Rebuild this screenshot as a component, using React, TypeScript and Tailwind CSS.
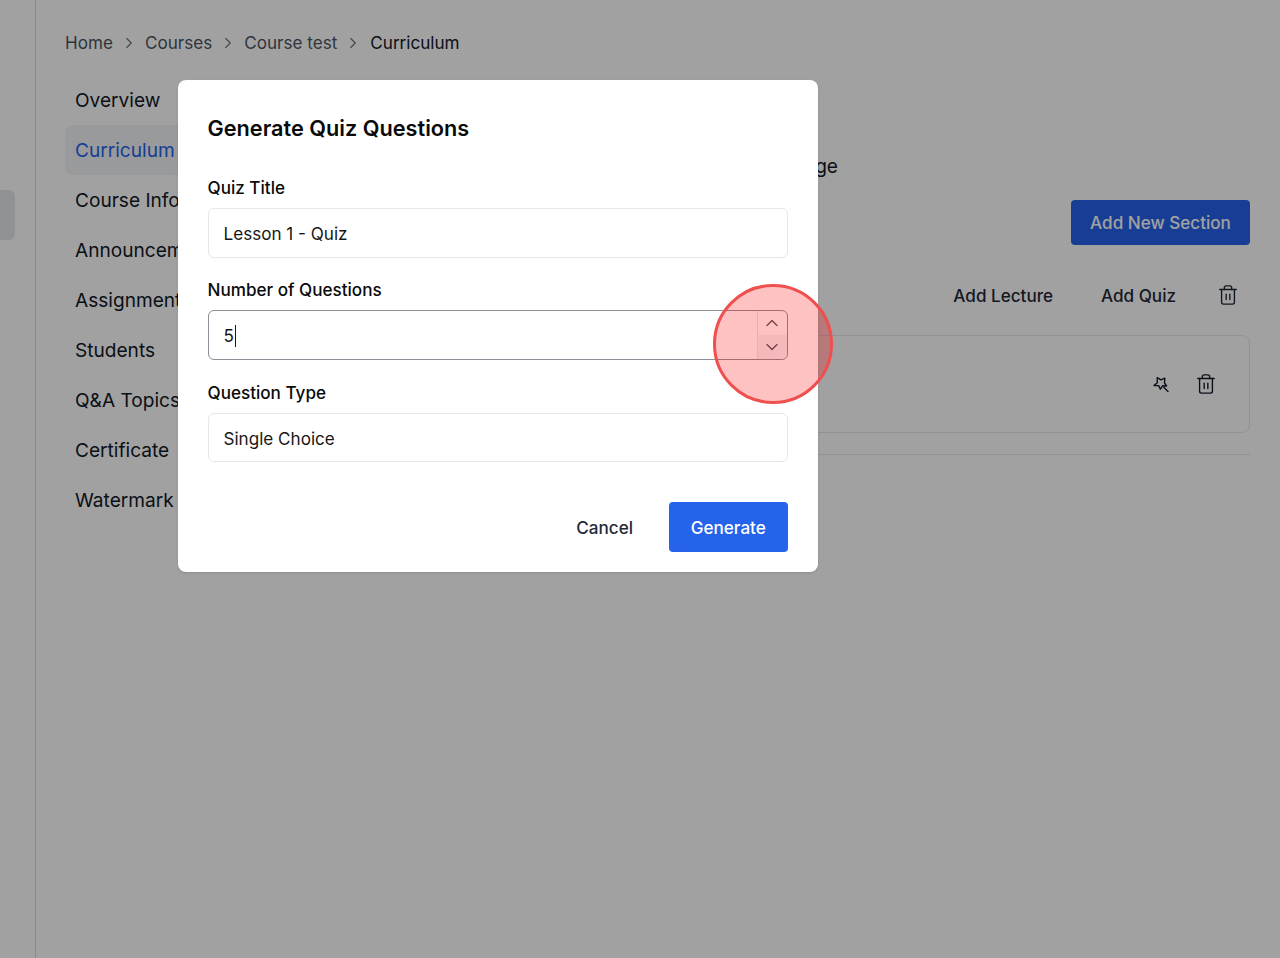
import { ChevronDown, ChevronRight, ChevronUp, Trash2 } from 'lucide-react';

const tabs = ['Overview', 'Curriculum', 'Course Info', 'Announcements', 'Assignments', 'Students', 'Q&A Topics', 'Certificate', 'Watermark'];
const crumbs = ['Home', 'Courses', 'Course test'];

function Wand() {
  return (
    <svg width="20" height="20" viewBox="0 0 20 20" fill="none" stroke="currentColor" strokeWidth="1.4" strokeLinejoin="round" strokeLinecap="round">
      <path d="M3 11.5 L6.3 8.8 L6.2 3.6 L10 5.8 L13.8 4.2 L13.5 9 L15.6 12 L11.6 11.8 L9.4 15.2 L7.6 11.6 Z" />
      <path d="M13 13.4 L17 17.4" />
    </svg>
  );
}

function Field({ label, value }: { label: string; value: string }) {
  return (
    <div className="flex flex-col">
      <label className="mb-[8px] text-[17.1px] leading-[24px] font-[450] text-[#0a0a0a]">{label}</label>
      <input
        readOnly
        value={value}
        className="h-[49.5px] w-full rounded-[6px] border border-[#e5e7eb] bg-white px-[15px] pt-[2px] text-[17.1px] text-[#171717] outline-none"
      />
    </div>
  );
}

export default function App() {
  return (
    <div className="relative h-[958px] w-[1280px] overflow-hidden bg-white font-['Inter',sans-serif] text-[#111827]">
      <div className="flex h-full">
        {/* Collapsed sidebar */}
        <aside className="w-[36px] shrink-0 border-r border-[#d9dbe0] pt-[190px]">
          <div className="h-[50px] w-[15px] rounded-r-[6px] bg-[#e5e7eb]" />
        </aside>

        <main className="flex-1 pl-[29px] pr-[30px] pt-[30px]">
          <nav className="flex h-[26px] items-center text-[17.1px] leading-[26px] text-[#4b5563]">
            {crumbs.map((c) => (
              <span key={c} className="flex items-center">
                {c}
                <ChevronRight className="mx-[7px] h-[18px] w-[18px] text-[#6b7280]" strokeWidth={1.5} />
              </span>
            ))}
            <span className="ml-[1px] text-[#111827]">Curriculum</span>
          </nav>

          <div className="mt-[19px] flex">
            <ul className="w-[180px] shrink-0 text-[19.1px]">
              {tabs.map((t) => (
                <li
                  key={t}
                  className={`flex h-[50px] items-center whitespace-nowrap rounded-[8px] px-[10px] pt-[1px] ${t === 'Curriculum' ? 'bg-[#f3f4f6] text-[#2563eb]' : 'text-[#111827]'}`}
                >
                  {t}
                </li>
              ))}
            </ul>

            <section className="ml-[35px] flex-1">
              <div className="mt-[78px] pr-[412px] text-right text-[19.1px] leading-[26px]">Curriculum Page</div>
              <div className="mt-[21px] flex justify-end">
                <button className="h-[45px] w-[179px] rounded-[4px] bg-[#2563eb] pt-[1px] text-[17.1px] font-[450] text-white">Add New Section</button>
              </div>

              <div className="mt-[30px] flex h-[40px] items-center justify-end pt-[1px] text-[17.1px] font-[450] text-[#1f2937]">
                <span>Add Lecture</span>
                <span className="ml-[48px]">Add Quiz</span>
                <Trash2 className="ml-[41px] mr-[11px] mb-[1px] h-[22px] w-[22px]" strokeWidth={1.5} />
              </div>

              <div className="mt-[20px] flex h-[98px] items-center justify-end rounded-[8px] border border-[#e5e7eb] pr-[32px] text-[#111827]">
                <Wand />
                <span className="ml-[24px]">
                  <Trash2 className="h-[22px] w-[22px]" strokeWidth={1.5} />
                </span>
              </div>

              <div className="mt-[21px] border-t border-[#e5e7eb]" />
            </section>
          </div>
        </main>
      </div>

      {/* Backdrop */}
      <div className="absolute inset-0 bg-black/[.37]" />

      {/* Dialog */}
      <div className="absolute left-[177.5px] top-[80px] w-[640px] rounded-[8px] bg-white px-[30px] pb-[20px] pt-[32px] shadow-sm">
        <h2 className="text-[21.7px] leading-[32px] font-semibold text-[#0a0a0a]">Generate Quiz Questions</h2>

        <div className="mt-[32px] flex flex-col gap-[20.5px]">
          <Field label="Quiz Title" value="Lesson 1 - Quiz" />

          <div className="flex flex-col">
            <label className="mb-[8px] text-[17.1px] leading-[24px] font-[450] text-[#0a0a0a]">Number of Questions</label>
            <div className="flex h-[50px] items-center rounded-[6px] border border-[#8a8f98] bg-white">
              <div className="flex flex-1 items-center pl-[15px] pt-[2px] text-[17.1px] text-[#171717]">
                5<span className="ml-[1px] h-[22px] w-px bg-[#111827]" />
              </div>
              <div className="flex h-full w-[30px] flex-col border-l border-[#e5e7eb] text-[#4b5563]">
                <div className="flex flex-1 items-center justify-center">
                  <ChevronUp className="h-[20px] w-[20px]" strokeWidth={1.6} />
                </div>
                <div className="flex flex-1 items-center justify-center rounded-br-[6px] bg-[#f3f4f6]">
                  <ChevronDown className="h-[20px] w-[20px]" strokeWidth={1.6} />
                </div>
              </div>
            </div>
          </div>

          <Field label="Question Type" value="Single Choice" />
        </div>

        <div className="mt-[40px] flex items-center justify-end">
          <button className="pt-[2px] text-[17.1px] font-[450] text-[#1f2937]">Cancel</button>
          <button className="ml-[36px] h-[50px] w-[118.5px] rounded-[4px] bg-[#2563eb] pt-[2px] text-[17.1px] font-[450] text-white">Generate</button>
        </div>
      </div>

      {/* Click highlight */}
      <div className="absolute left-[713px] top-[284px] h-[120px] w-[120px] rounded-full border-[3px] border-[#ef4f4f] bg-[rgba(255,0,0,0.24)]" />
    </div>
  );
}
